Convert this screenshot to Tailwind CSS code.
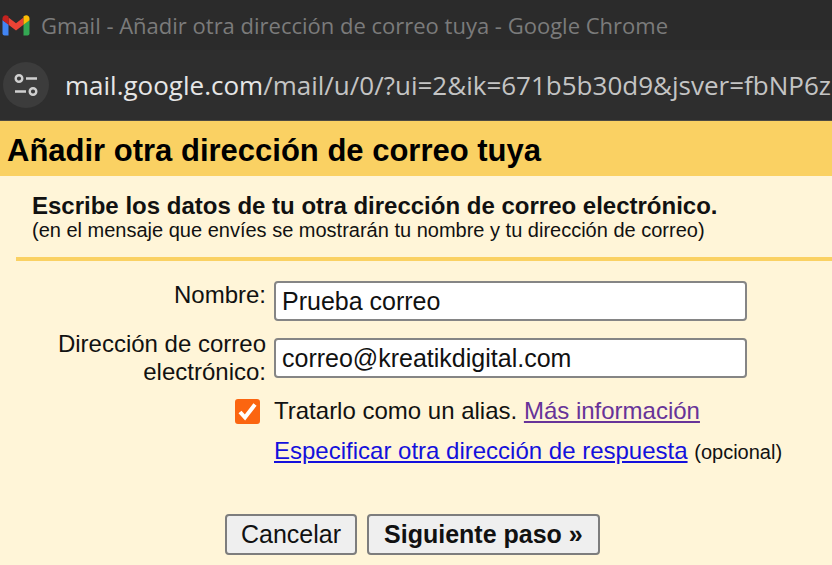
<!DOCTYPE html>
<html lang="es">
<head>
    <meta charset="UTF-8">
    <meta name="viewport" content="width=device-width, initial-scale=1.0">
    <title>Gmail - Añadir otra dirección de correo tuya</title>
    <script src="https://cdn.jsdelivr.net/npm/@tailwindcss/browser@4"></script>
</head>
<body class="bg-[#fff5d8] min-h-screen overflow-x-hidden font-['Liberation_Sans',Arial,sans-serif] text-[#111111]">
    <!-- Browser window -->
    <div class="bg-[#2b2b2b] font-['Open_Sans','Noto_Sans',sans-serif] whitespace-nowrap overflow-hidden">
        <div class="flex items-center gap-[11px] h-[50px] pl-[2px] text-[22px] text-[#7b7b7b]">
            <svg class="w-7 h-[21px] shrink-0" viewBox="0 0 28 21" aria-hidden="true">
                <path fill="#4285f4" d="M0.5 5 6.5 9.5V20.5H2.5a2 2 0 0 1-2-2z"/>
                <path fill="#34a853" d="M27.5 5 21.5 9.5V20.5h4a2 2 0 0 0 2-2z"/>
                <path fill="#ea4335" d="M6.5 2.5 14 8.2 21.5 2.5V9.8L14 15.5 6.5 9.8z"/>
                <path fill="#c5221f" d="M0.5 3.5C0.5 0.4 3.7-0.8 6 1L6.5 1.5V9.8L0.5 5.3z"/>
                <path fill="#fbbc04" d="M27.5 3.5C27.5 0.4 24.3-0.8 22 1L21.5 1.5V9.8L27.5 5.3z"/>
            </svg>
            <span>Gmail - Añadir otra dirección de correo tuya - Google Chrome</span>
        </div>
        <div class="flex items-center gap-4 h-[71px] pl-[3px] bg-[#2e2e2e] text-[26px] text-[#c4c4c4] border-b border-[#4d4a43]">
            <button type="button" aria-label="Información del sitio" class="w-[46px] h-[46px] shrink-0 rounded-full bg-[#3c3c3c] flex items-center justify-center">
                <svg class="w-6 h-6" viewBox="0 0 24 24" fill="none" stroke="#d0d0d0" stroke-width="2.4" aria-hidden="true">
                    <circle cx="5" cy="5.5" r="3.3"/>
                    <path d="M12 5.500h11M1 18.500h11"/>
                    <circle cx="19" cy="18.5" r="3.3"/>
                </svg>
            </button>
            <span><span class="text-[#e6e6e6]">mail.google.com</span>/mail/u/0/?ui=2&amp;ik=671b5b30d9&amp;jsver=fbNP6z</span>
        </div>
    </div>

    <header class="bg-[#fad163] px-[7px] pt-3 pb-2">
        <h1 class="text-[31px] leading-[35px] font-bold text-black">Añadir otra dirección de correo tuya</h1>
    </header>

    <main class="pl-4">
        <div class="pt-4 pb-4 pl-4 border-b-4 border-[#fad163]">
            <h2 class="text-[24px] leading-7 font-bold">Escribe los datos de tu otra dirección de correo electrónico.</h2>
            <p class="text-[20px] leading-[21px]">(en el mensaje que envíes se mostrarán tu nombre y tu dirección de correo)</p>
        </div>

        <form class="pt-5">
            <div class="grid grid-cols-[250px_1fr] gap-x-2 text-[24px] leading-7">
                <label for="nombre" class="text-right">Nombre:</label>
                <div class="h-[57px]">
                    <input type="text" id="nombre" name="nombre" value="Prueba correo"
                        class="w-full max-w-[473px] h-10 px-[6px] bg-white border-2 border-[#858585] rounded-sm text-[25px]">
                </div>

                <label for="correo" class="text-right -mt-2">Dirección de correo electrónico:</label>
                <div class="h-[59px]">
                    <input type="email" id="correo" name="correo" value="correo@kreatikdigital.com"
                        class="w-full max-w-[473px] h-10 px-[6px] bg-white border-2 border-[#858585] rounded-sm text-[25px]">
                </div>

                <div class="flex justify-end items-center pr-[6px]">
                    <span class="relative flex">
                        <input type="checkbox" id="alias" name="alias" checked class="peer appearance-none w-[25px] h-[25px] rounded-[3px] border-2 border-[#767676] bg-white checked:bg-[#fb6510] checked:border-[#fb6510]">
                        <svg class="absolute inset-0 w-[25px] h-[25px] pointer-events-none invisible peer-checked:visible" viewBox="0 0 25 25" fill="none" stroke="#ffffff" stroke-width="4" aria-hidden="true">
                            <path d="M5 13l5 5.500L20 5.500"/>
                        </svg>
                    </span>
                </div>
                <div>
                    <label for="alias">Tratarlo como un alias.</label>
                    <a href="#" class="text-[#673399] underline">Más información</a>
                </div>

                <div class="col-start-2 pt-3">
                    <a href="#" class="text-[#1410dc] underline">Especificar otra dirección de respuesta</a>
                    <span class="text-[20px]">(opcional)</span>
                </div>
            </div>

            <div class="flex gap-[10px] pt-12 pb-2 pl-[209px] text-[25px]">
                <button type="button" class="h-[41px] px-[14px] bg-[#efefef] border-2 border-[#7d7d7d] rounded-[4px]">Cancelar</button>
                <button type="submit" class="h-[41px] px-[15px] bg-[#efefef] border-2 border-[#7d7d7d] rounded-[4px] font-bold">Siguiente paso »</button>
            </div>
        </form>
    </main>
</body>
</html>
